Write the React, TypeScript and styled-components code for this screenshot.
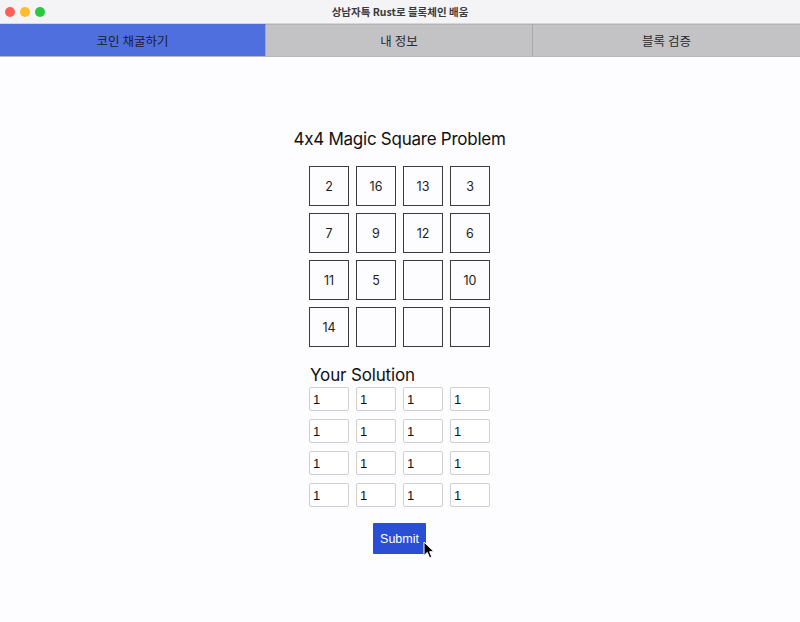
import React, { useState } from 'react'
import styled, { createGlobalStyle } from 'styled-components'

const GlobalStyle = createGlobalStyle`
  html, body {
    margin: 0;
    padding: 0;
    background: #fdfcfe;
  }
`

const problem: (number | null)[] = [
  2, 16, 13, 3,
  7, 9, 12, 6,
  11, 5, null, 10,
  14, null, null, null,
]

const tabs = ['코인 채굴하기', '내 정보', '블록 검증']

const App: React.FC = () => {
  const [activeTab, setActiveTab] = useState<number>(0)
  const [solution, setSolution] = useState<string[]>(Array(16).fill('1'))

  const changeCell = (index: number, value: string) => {
    const next = [...solution]
    next[index] = value
    setSolution(next)
  }

  return <Window>
    <GlobalStyle />
    <TitleBar>
      <Lights>
        <Light color="#fe5f57" />
        <Light color="#febc2e" />
        <Light color="#28c840" />
      </Lights>
      <Title>상남자특 Rust로 블록체인 배움</Title>
    </TitleBar>
    <TabBar>
      {tabs.map((t, i) => <Tab key={i} active={i === activeTab} onClick={() => setActiveTab(i)}>{t}</Tab>)}
    </TabBar>
    <Content>
      <Heading>4x4 Magic Square Problem</Heading>
      <ProblemGrid>
        {problem.map((n, i) => <Cell key={i}>{n ?? ''}</Cell>)}
      </ProblemGrid>
      <SolutionBlock>
        <SubHeading>Your Solution</SubHeading>
        <SolutionGrid>
          {solution.map((v, i) => <CellInput key={i} value={v} onChange={(e) => changeCell(i, e.target.value)} />)}
        </SolutionGrid>
      </SolutionBlock>
      <SubmitWrap>
        <SubmitButton>Submit</SubmitButton>
        <Cursor width="12" height="18" viewBox="0 0 12 18">
          <path d="M1 1 L1 14.5 L4.3 11.4 L6.6 16.8 L8.8 15.9 L6.6 10.7 L11 10.7 Z" fill="#000" stroke="#fff" strokeWidth="1" strokeLinejoin="round" />
        </Cursor>
      </SubmitWrap>
    </Content>
  </Window>
}

const Window = styled.div`
  width: 800px;
  height: 622px;
  display: flex;
  flex-direction: column;
  background: #fdfcfe;
  overflow: hidden;
`

const TitleBar = styled.div`
  height: 23px;
  flex: none;
  position: relative;
  display: flex;
  align-items: center;
  justify-content: center;
  background: #f4f3f5;
  border-bottom: 1px solid #d6d5d8;
`

const Lights = styled.div`
  position: absolute;
  left: 5px;
  top: 7px;
  display: flex;
  gap: 5px;
`

const Light = styled.span<{ color: string }>`
  width: 10px;
  height: 10px;
  border-radius: 50%;
  background: ${p => p.color};
`

const Title = styled.div`
  font-family: "Noto Sans CJK KR", "Liberation Sans", sans-serif;
  font-size: 10.5px;
  font-weight: 700;
  color: #3a3a3c;
`

const TabBar = styled.div`
  height: 32px;
  flex: none;
  display: grid;
  grid-template-columns: 266px 267px 1fr;
  border-bottom: 1px solid #b9b8bb;
`

const Tab = styled.div<{ active: boolean }>`
  display: flex;
  align-items: center;
  justify-content: center;
  font-family: "Noto Sans CJK KR", "Liberation Sans", sans-serif;
  font-size: 12.5px;
  color: ${p => p.active ? '#1b1d2e' : '#2a2a2c'};
  background: ${p => p.active ? '#4e6fdd' : '#c3c2c5'};
  border-right: 1px solid #a9a8ab;
  border-top: 1px solid ${p => p.active ? '#4e6fdd' : '#b3b2b5'};
  cursor: pointer;
  &:last-child {
    border-right: none;
  }
`

const Content = styled.div`
  flex: 1;
  display: flex;
  flex-direction: column;
  align-items: center;
  padding-top: 71px;
  padding-right: 1px;
  font-family: Inter, "Liberation Sans", sans-serif;
`

const Heading = styled.h2`
  margin: 0;
  font-size: 17px;
  line-height: 22px;
  font-weight: 400;
  color: #111;
  letter-spacing: -0.25px;
`

const ProblemGrid = styled.div`
  margin-top: 16px;
  display: grid;
  grid-template-columns: repeat(4, 40px);
  grid-auto-rows: 40px;
  gap: 7px;
`

const Cell = styled.div`
  display: flex;
  align-items: center;
  justify-content: center;
  border: 1px solid #3c3c3c;
  font-size: 12.5px;
  color: #1c1c1c;
`

const SolutionBlock = styled.div`
  margin-top: 18px;
  display: flex;
  flex-direction: column;
`

const SubHeading = styled.h3`
  margin: 0 0 2px 1px;
  font-size: 17px;
  line-height: 20px;
  font-weight: 400;
  color: #111;
  letter-spacing: -0.15px;
`

const SolutionGrid = styled.div`
  display: grid;
  grid-template-columns: repeat(4, 40px);
  grid-auto-rows: 24px;
  column-gap: 7px;
  row-gap: 8px;
`

const CellInput = styled.input`
  box-sizing: border-box;
  width: 40px;
  height: 24px;
  padding: 0 3px;
  border: 1px solid #d0cfd2;
  border-radius: 2px;
  background: #fff;
  font-family: "Liberation Sans", Arial, sans-serif;
  font-size: 13px;
  color: #111;
  outline: none;
`

const SubmitWrap = styled.div`
  margin-top: 16px;
  position: relative;
`

const SubmitButton = styled.button`
  width: 53px;
  height: 31px;
  border: none;
  border-radius: 1px;
  background: #2a4fd5;
  color: #fff;
  font-family: "Liberation Sans", Arial, sans-serif;
  font-size: 12.5px;
  padding: 0;
  cursor: pointer;
`

const Cursor = styled.svg`
  position: absolute;
  left: 50px;
  top: 18px;
  pointer-events: none;
`

export default App
